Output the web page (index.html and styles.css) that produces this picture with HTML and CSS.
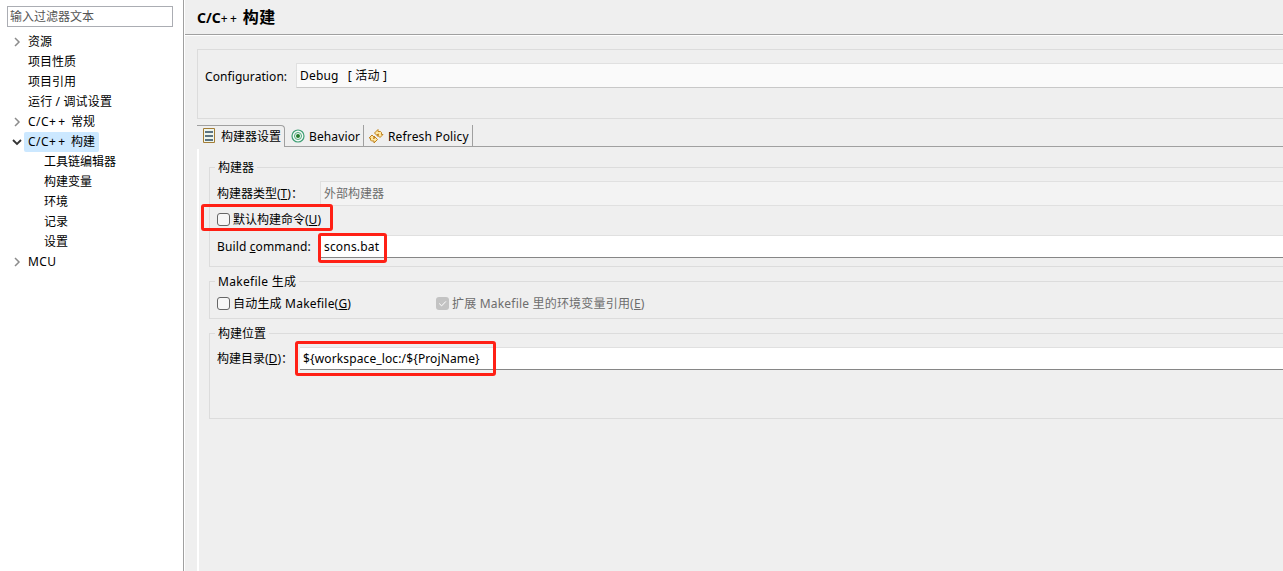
FILE: index.html
```html
<!DOCTYPE html>
<html lang="zh-CN">
<head>
<meta charset="utf-8">
<title>C/C++ 构建</title>
<link rel="stylesheet" href="styles.css">
</head>
<body>
<aside class="sidebar">
  <div class="filter">输入过滤器文本</div>
  <ul class="tree">
    <li><svg class="arrow" viewBox="0 0 10 10"><path d="M3 1l4 4-4 4"/></svg><span class="node">资源</span></li>
    <li><span class="node">项目性质</span></li>
    <li><span class="node">项目引用</span></li>
    <li><span class="node path">运行 / 调试设置</span></li>
    <li><svg class="arrow" viewBox="0 0 10 10"><path d="M3 1l4 4-4 4"/></svg><span class="node"><span class="lang">C/C<span class="signs">++</span> </span>常规</span></li>
    <li><svg class="arrow open" viewBox="0 0 10 10"><path d="M1 3l4 4 4-4"/></svg><span class="node selected"><span class="lang">C/C<span class="signs">++</span> </span>构建</span></li>
    <li class="child"><span class="node">工具链编辑器</span></li>
    <li class="child"><span class="node">构建变量</span></li>
    <li class="child"><span class="node">环境</span></li>
    <li class="child"><span class="node">记录</span></li>
    <li class="child"><span class="node">设置</span></li>
    <li><svg class="arrow" viewBox="0 0 10 10"><path d="M3 1l4 4-4 4"/></svg><span class="node lang">MCU</span></li>
  </ul>
</aside>
<main class="page">
  <header class="title"><h1>C/C<span class="plus">++</span> <span class="heading">构建</span></h1></header>
  <section class="config">
    <label class="config-label">Configuration:</label>
    <div class="combo"><span class="mode">Debug</span><span class="state">[ 活动 ]</span></div>
  </section>
  <nav class="tabs">
    <div class="tab active">
      <svg class="icon list" viewBox="0 0 12 15"><path class="frame" d="M.5.5h11v14H.5z"/><path class="rows" d="M2 4h8M2 8h8M2 12h8"/></svg>
      <span>构建器设置</span>
    </div>
    <div class="tab behavior">
      <svg class="icon target" viewBox="0 0 14 14"><circle class="outer" cx="7" cy="7" r="6"/><circle class="inner" cx="7" cy="7" r="3.5"/><circle class="dot" cx="7" cy="7" r="2"/></svg>
      <span>Behavior</span>
    </div>
    <div class="tab refresh">
      <svg class="icon sync" viewBox="0 0 16 16"><path d="M6.500 5L10 1.500V3.500H12.500L13.500 4.500V6.500H15L12 9.500L9 6.500H10.500V6H10V8.500Z"/><path d="M9.500 11.500L6 15V13H3.500L2.500 12V10H1L4 7L7 10H5.500V10.500H6V8Z"/></svg>
      <span>Refresh Policy</span>
    </div>
  </nav>
  <section class="panel">
    <div class="group builder">
      <span class="legend">构建器</span>
      <div class="row type"><label>构建器类型(<u>T</u>)：</label><div class="combo disabled">外部构建器</div></div>
      <div class="row default"><div class="mark"><i class="box"></i><span>默认构建命令(<u>U</u>)</span></div></div>
      <div class="row command"><label>Build <u>c</u>ommand:</label><div class="field"><span class="callout">scons.bat</span></div></div>
    </div>
    <div class="group makefile">
      <span class="legend wide">Makefile 生成</span>
      <div class="row checks">
        <div class="check"><i class="box"></i><span>自动生成 Makefile(<u>G</u>)</span></div>
        <div class="check off"><svg class="ticked" viewBox="0 0 13 13"><path d="M3.200 6.500l2.400 2.400 4.300-4.500"/></svg><span>扩展 Makefile 里的环境变量引用(<u>E</u>)</span></div>
      </div>
    </div>
    <div class="group location">
      <span class="legend">构建位置</span>
      <div class="row dir"><label>构建目录(<u>D</u>)：</label><div class="field"><span class="callout">${workspace_loc:/${ProjName}</span></div></div>
    </div>
  </section>
</main>
</body>
</html>
```
FILE: styles.css
```css
* { box-sizing: border-box; }
body {
  margin: 0;
  width: 1283px;
  height: 571px;
  display: flex;
  overflow: hidden;
  background: #efefef;
  color: #000;
  font: 12px/20px "Noto Sans", "Noto Sans CJK SC", sans-serif;
  white-space: nowrap;
}
svg { flex: none; fill: none; }
u { text-underline-offset: 1px; text-decoration-thickness: 1px; }

.sidebar {
  flex: none;
  width: 184px;
  padding: 6px 0 0 7px;
  background: #fff;
  border-right: 1px solid #a0a0a0;
}
.filter {
  width: 166px;
  height: 21px;
  padding-left: 2px;
  border: 1px solid #abadb3;
  color: #555;
  line-height: 19px;
}
.tree { margin: 5px 0 0; padding: 0; list-style: none; }
.tree li { display: flex; height: 20px; padding-left: 17px; align-items: center; }
.tree .child { padding-left: 33px; }
.arrow { width: 10px; height: 10px; margin: 0 2px 0 -12px; stroke: #8c8c8c; stroke-width: 1.5; }
.arrow.open { stroke: #333; stroke-width: 1.8; }
.node { padding: 0 4px; line-height: 20px; }
.path { letter-spacing: .15px; }
.lang { letter-spacing: .45px; }
.signs { letter-spacing: 2.4px; }
.selected { background: #cce8ff; border-radius: 2px; }

.page { flex: 1; min-width: 0; border-left: 1px solid #fff; }
.title { height: 36px; padding-left: 12px; border-bottom: 1px solid #fff; box-shadow: inset 0 -1px #a0a0a0; }
h1 { margin: 0; font-size: 14px; line-height: 34px; font-weight: 700; }
.plus { font-size: 12px; font-weight: 500; letter-spacing: 2.3px; }
.heading { font-size: 16px; letter-spacing: .4px; }

.config {
  display: flex;
  height: 70px;
  margin: 13px 0 0 12px;
  padding: 13px 0 0 7px;
  border: 1px solid #dcdcdc;
  border-right: 0;
}
.config-label { width: 91px; line-height: 27px; letter-spacing: .08px; }
.combo {
  flex: 1;
  display: flex;
  height: 25px;
  padding-left: 3px;
  line-height: 24px;
  background: #fafafa;
  border: 1px solid #e0e0e0;
  border-bottom-color: #c8c8c8;
  border-right: 0;
}
.mode { letter-spacing: .2px; }
.state { margin-left: 9px; letter-spacing: .2px; }

.tabs { display: flex; height: 22px; margin: 6px 0 0 12px; }
.tabs::after { content: ""; flex: 1; border-bottom: 1px solid #a0a0a0; }
.tab { display: flex; align-items: center; border-right: 1px solid #a0a0a0; border-bottom: 1px solid #a0a0a0; }
.tab span { line-height: 18px; padding-top: 3px; }
.tab.active { width: 88px; padding-left: 6px; border-top: 1px solid #a0a0a0; border-bottom: 0; border-top-right-radius: 4px; }
.tab.active span { padding-top: 1px; }
.behavior { width: 79px; padding-left: 6px; letter-spacing: .12px; }
.refresh { width: 109px; padding-left: 4px; letter-spacing: .14px; }
.list { width: 12px; height: 15px; margin: -2px 6px 0 0; }
.frame { fill: #eef6ee; stroke: #a37d35; }
.rows { stroke: #5c7482; stroke-width: 2; }
.target { width: 14px; height: 14px; margin: 1px 4px 0 0; }
.outer { stroke: #3f9e74; fill: #f4faf6; stroke-width: 1.2; }
.inner { stroke: #4aa67a; }
.dot { fill: #237a2c; }
.sync { width: 16px; height: 16px; margin: 1px 4px 0 0; }
.sync path { fill: #ffe7a0; stroke: #c08320; }

.panel { height: 422px; margin: 2px 0 0 12px; padding: 18px 0 0 10px; border-left: 2px solid #fff; }
.group { border: 1px solid #dcdcdc; border-right: 0; padding-left: 7px; }
.legend { display: table; margin: -10px 0 0 -2px; padding: 0 3px; background: #efefef; line-height: 20px; }
.wide { letter-spacing: .3px; }
.row { display: flex; }
.builder { height: 100px; }
.makefile { height: 38px; margin-top: 14px; }
.location { height: 86px; margin-top: 14px; }
.type { margin-top: 3px; height: 25px; }
.type label { width: 103px; line-height: 25px; }
.combo.disabled { background: #f3f3f3; border-color: #e0e0e0; color: #6d6d6d; }
.mark, .callout { border: 3px solid #ff2015; border-radius: 3px; }
.mark { display: flex; align-items: center; width: 132px; height: 27px; margin: -2px 0 0 -16px; padding: 3px 0 0 13px; z-index: 1; }
.mark span { padding-top: 1px; }
.box { flex: none; width: 13px; height: 13px; border: 1px solid #666; border-radius: 3px; background: #f7f7f7; margin-right: 3px; }
.command { margin-top: 4px; height: 23px; letter-spacing: .12px; }
.command label { width: 103px; line-height: 24px; }
.field { flex: 1; height: 23px; background: #fff; border-top: 1px solid #e0e0e0; border-bottom: 1px solid #868686; }
.callout { display: block; }
.command .callout { width: 69px; height: 30px; margin: -3px 0 0 -2px; padding-left: 3px; line-height: 21px; letter-spacing: .18px; }
.checks { margin-top: 2px; height: 20px; letter-spacing: .2px; }
.check { display: flex; align-items: center; width: 219px; }
.check .box, .ticked { margin-top: -1px; }
.off { color: #6d6d6d; }
.ticked { width: 13px; height: 13px; margin-right: 3px; background: #c3c3c3; border-radius: 3px; stroke: #fff; }
.dir { margin-top: 3px; }
.dir label { width: 83px; line-height: 23px; }
.dir .callout { width: 201px; height: 35px; margin: -7px 0 0 -5px; padding-left: 5px; line-height: 29px; letter-spacing: .13px; }
```
